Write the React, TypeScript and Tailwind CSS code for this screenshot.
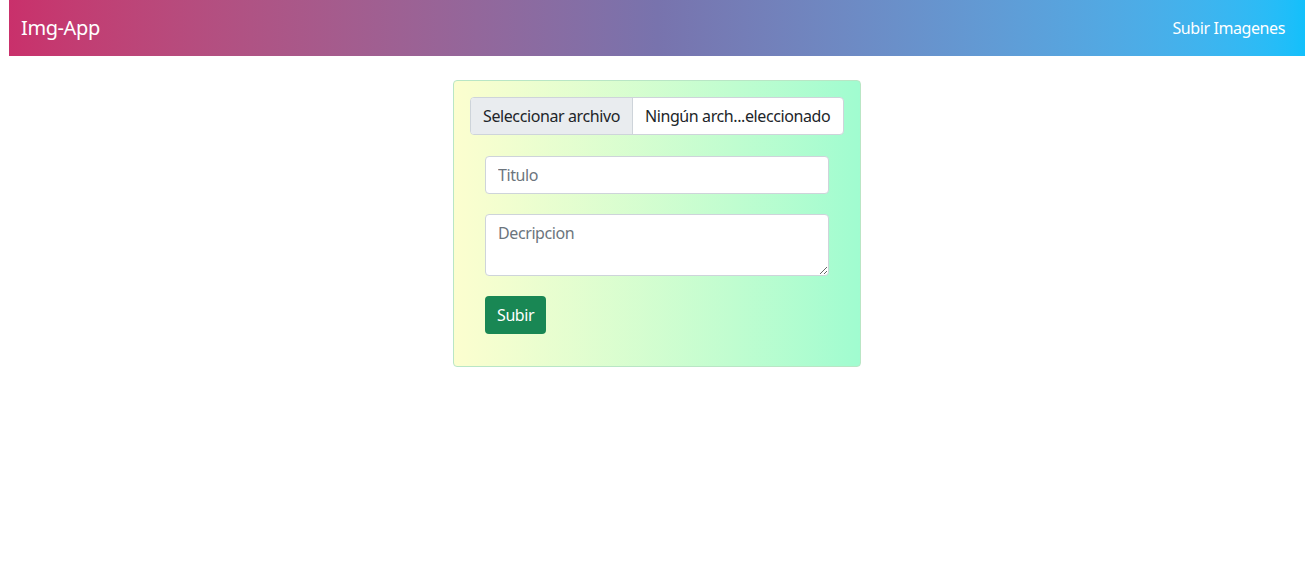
export default function App() {
  return (
    <div className="min-h-[571px] bg-white font-['Noto_Sans',sans-serif] tracking-[-0.4px] text-[#212529]">
      <nav className="ml-[9px] flex h-[56px] w-[1296px] items-center justify-between bg-gradient-to-r from-[#c9306b] via-[#7873ad] to-[#12c0fb] px-3">
        <span className="text-[20px] text-white">Img-App</span>
        <span className="mr-[8px] text-[16px] text-white">Subir Imagenes</span>
      </nav>

      <div className="flex justify-center pt-6">
        <div className="ml-[6px] w-[408px] rounded border border-[#b9e6c5] bg-gradient-to-r from-[#fcfecf] to-[#a0fcd0] p-4">
          <div className="flex h-[38px] overflow-hidden rounded border border-[#ced4da] bg-white text-[16px]">
            <span className="flex items-center border-r border-[#ced4da] bg-[#e9ecef] px-3 whitespace-nowrap">Seleccionar archivo</span>
            <span className="flex flex-1 items-center px-3 whitespace-nowrap">Ningún arch...eleccionado</span>
          </div>

          <form className="flex flex-col gap-5 px-[15px] pt-[21px] pb-4">
            <input
              placeholder="Titulo"
              className="h-[38px] w-full rounded border border-[#ced4da] bg-white px-3 text-[16px] placeholder:text-[#6c757d]"
            />
            <textarea
              placeholder="Decripcion"
              className="h-[62px] w-full rounded border border-[#ced4da] bg-white px-3 py-1.5 text-[16px] placeholder:text-[#6c757d]"
            />
            <div>
              <button type="button" className="h-[38px] rounded bg-[#198754] px-3 text-[16px] text-white">
                Subir
              </button>
            </div>
          </form>
        </div>
      </div>
    </div>
  );
}
